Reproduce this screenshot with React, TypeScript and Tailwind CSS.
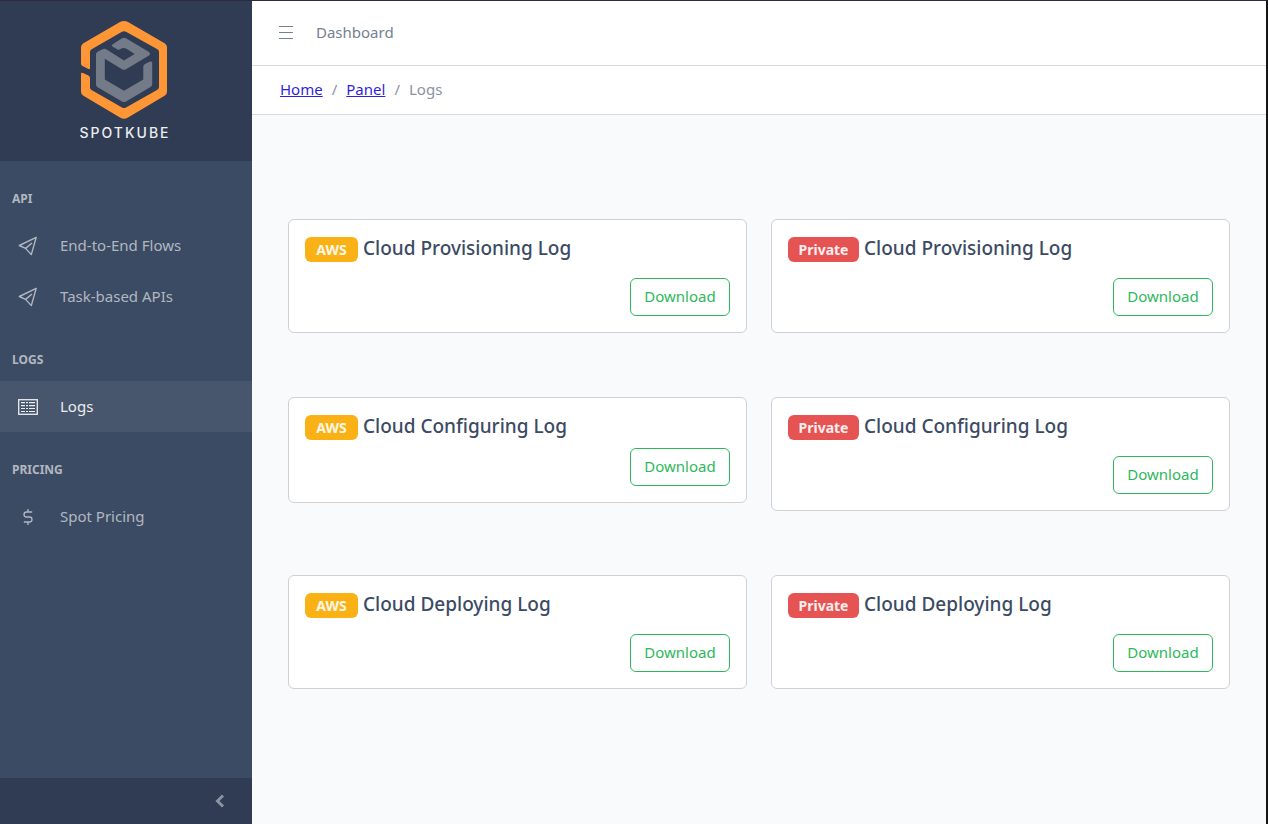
import React from "react";

type IconProps = { className?: string };

function Logo() {
  return (
    <svg viewBox="0 0 88 100" className="h-[100px] w-[88px]" aria-hidden="true">
      <path
        d="M1 43.500V27.500Q1 25 3 23.500L40 2Q44 0 48 2L85 23.500Q87 25 87 27.500V71.500Q87 74 85 75.500L48 97.500Q44 100 40 97.500L3 75.500Q1 74 1 71.500V54Q1 52 3 53L8.500 55.500Q10 56.500 10 58V67.500Q10 69 11.500 70L42 87.500Q44 88.500 46 87.500L77 70Q79 69 79 67V32Q79 30 77 29L46 11.800Q44 10.800 42 11.800L12 29Q10 30 10 32V48Q10 49.500 8.500 49L2.500 46Q1 45 1 43.500Z"
        fill="#ff9636"
      />
      <path
        d="M16 34.500Q16 32.500 18 31.500L22.500 29.200Q25 28.300 27 29.800L44 40.500L54.700 34L46.500 28.800Q44 27.500 42 28.300L39.500 29.600Q38.500 30 37.500 29.400L32.500 26.500Q31 25.400 32.500 24.500L42 18.300Q44 17.200 46 18.300L69 32Q71 33.800 69 35.500L46 49.300Q44 50.300 42 49.300L24.800 38.800V59.500L44 70.800L63.300 59.500V46.500Q63.300 45 65 44L70 41.600Q72.200 41 72.200 43V64Q72.200 66 70.500 67L46 81.500Q44 82.500 42 81.500L18 67.500Q16 66.300 16 64.500Z"
        fill="#747b88"
      />
    </svg>
  );
}

function PlaneIcon({ className }: IconProps) {
  return (
    <svg viewBox="0 0 20 20" className={className} fill="none" stroke="currentColor" strokeWidth="1.400" strokeLinejoin="round" aria-hidden="true">
      <path d="M18.200 1.400 1.300 9.500 7.600 12.400 13.300 18.600Z" />
      <path d="M7.600 12.400 14 7" />
    </svg>
  );
}

function LogsIcon({ className }: IconProps) {
  return (
    <svg viewBox="0 0 20 20" className={className} fill="none" stroke="currentColor" aria-hidden="true">
      <rect x="0.700" y="2.700" width="18.600" height="14.600" strokeWidth="1.300" />
      <path d="M3 5.600H7M8 5.600H10M11 5.600H17M3 8.600H7M8 8.600H10M11 8.600H17M3 11.500H7M8 11.500H10M11 11.500H17M3 14.500H7M8 14.500H10M11 14.500H17" strokeWidth="1.200" />
    </svg>
  );
}

function DollarIcon({ className }: IconProps) {
  return (
    <svg viewBox="0 0 20 20" className={className} fill="none" stroke="currentColor" strokeWidth="1.300" aria-hidden="true">
      <path d="M10 2V5M10 15V18M14.200 5H8.500A2.500 2.500 0 0 0 8.500 10H11.500A2.500 2.500 0 0 1 11.500 15H5.800" />
    </svg>
  );
}

type NavItem = { label: string; icon: (props: IconProps) => React.ReactNode; active?: boolean };

const sections: { title: string; items: NavItem[] }[] = [
  {
    title: "API",
    items: [
      { label: "End-to-End Flows", icon: PlaneIcon },
      { label: "Task-based APIs", icon: PlaneIcon },
    ],
  },
  { title: "LOGS", items: [{ label: "Logs", icon: LogsIcon, active: true }] },
  { title: "PRICING", items: [{ label: "Spot Pricing", icon: DollarIcon }] },
];

function Sidebar() {
  return (
    <aside className="flex w-[252px] shrink-0 flex-col bg-[#3c4b64] text-[#b1b7c1]">
      <div className="flex flex-col items-center gap-[3px] bg-[#303c54] pt-[19px] pr-1 pb-[18px] text-[#ebedef]">
        <Logo />
        <span className="pl-[2px] font-[Inter] text-[14px] leading-[20px] font-medium tracking-[2px]">SPOTKUBE</span>
      </div>
      <nav className="grow">
        {sections.map((section) => (
          <section key={section.title}>
            <h2 className="px-3 pt-7 pb-3 text-[12px] leading-[19px] font-bold">{section.title}</h2>
            <ul>
              {section.items.map(({ label, icon: Icon, active }) => (
                <li key={label}>
                  <a
                    href="#"
                    aria-current={active ? "page" : undefined}
                    className={
                      active
                        ? "flex h-[51px] items-center gap-[22px] bg-[#48566d] pl-[18px] text-[#ebedef]"
                        : "flex h-[51px] items-center gap-[22px] pl-[18px]"
                    }
                  >
                    <Icon className="size-5" />
                    <span className="pb-[2px]">{label}</span>
                  </a>
                </li>
              ))}
            </ul>
          </section>
        ))}
      </nav>
      <button type="button" aria-label="Collapse sidebar" className="flex h-[46px] items-center justify-end bg-[#303c54] pr-[26px] text-[#8a93a2]">
        <svg viewBox="0 0 12 16" className="h-4 w-3" fill="none" stroke="currentColor" strokeWidth="3" aria-hidden="true">
          <path d="M9 2.500 3.500 8 9 13.500" />
        </svg>
      </button>
    </aside>
  );
}

type Log = { cloud: "AWS" | "Private"; title: string; compact?: boolean };

const logs: Log[] = [
  { cloud: "AWS", title: "Cloud Provisioning Log" },
  { cloud: "Private", title: "Cloud Provisioning Log" },
  { cloud: "AWS", title: "Cloud Configuring Log", compact: true },
  { cloud: "Private", title: "Cloud Configuring Log" },
  { cloud: "AWS", title: "Cloud Deploying Log" },
  { cloud: "Private", title: "Cloud Deploying Log" },
];

function LogCard({ cloud, title, compact }: Log) {
  return (
    <article className="rounded-md border border-[#d0d1d4] bg-white p-4">
      <h3 className="flex h-[26px] items-start gap-[5px] text-[19px] leading-6 font-medium text-[#3c4b64]">
        <span
          className={
            cloud === "AWS"
              ? "mt-px min-w-[53px] rounded-md bg-[#f9b115] px-[10px] text-center text-[14px] leading-[25px] font-bold text-white/90"
              : "mt-px min-w-[71px] rounded-md bg-[#e55353] px-[10px] text-center text-[14px] leading-[25px] font-bold text-white/90"
          }
        >
          {cloud}
        </span>
        {title}
      </h3>
      <div className={compact ? "flex justify-end pt-2" : "flex justify-end pt-4"}>
        <button type="button" className="h-[38px] min-w-[100px] rounded-md border border-[#2eb85c] px-3 pb-[2px] text-[#2eb85c]">
          Download
        </button>
      </div>
    </article>
  );
}

export default function App() {
  return (
    <div className="flex min-h-screen border-t border-r-2 border-t-[#2c2c3c] border-r-[#151515] bg-[#f9fafc] font-['Noto_Sans',sans-serif] text-[15px] leading-6">
      <Sidebar />
      <div className="min-w-0 grow">
        <header className="bg-white">
          <div className="flex h-[65px] items-center gap-[22px] border-b border-[#d8dbe0] px-[26px] pb-[2px] text-[#768192]">
            <button type="button" aria-label="Toggle sidebar">
              <svg viewBox="0 0 16 16" className="size-4" stroke="currentColor" aria-hidden="true">
                <path d="M1 2.500H15M1 8.500H15M1 14.500H15" />
              </svg>
            </button>
            <span>Dashboard</span>
          </div>
          <nav aria-label="Breadcrumb" className="flex h-[49px] items-center gap-[9px] border-b border-[#d8dbe0] px-7 pb-[2px] text-[#8a93a2]">
            <a href="#" className="text-[#321fdb] underline">Home</a>
            <span>/</span>
            <a href="#" className="text-[#321fdb] underline">Panel</a>
            <span>/</span>
            <span>Logs</span>
          </nav>
        </header>
        <main className="grid grid-cols-2 items-start gap-x-6 gap-y-16 px-9 pt-[104px] pb-16">
          {logs.map((log) => (
            <LogCard key={log.cloud + log.title} {...log} />
          ))}
        </main>
      </div>
    </div>
  );
}
